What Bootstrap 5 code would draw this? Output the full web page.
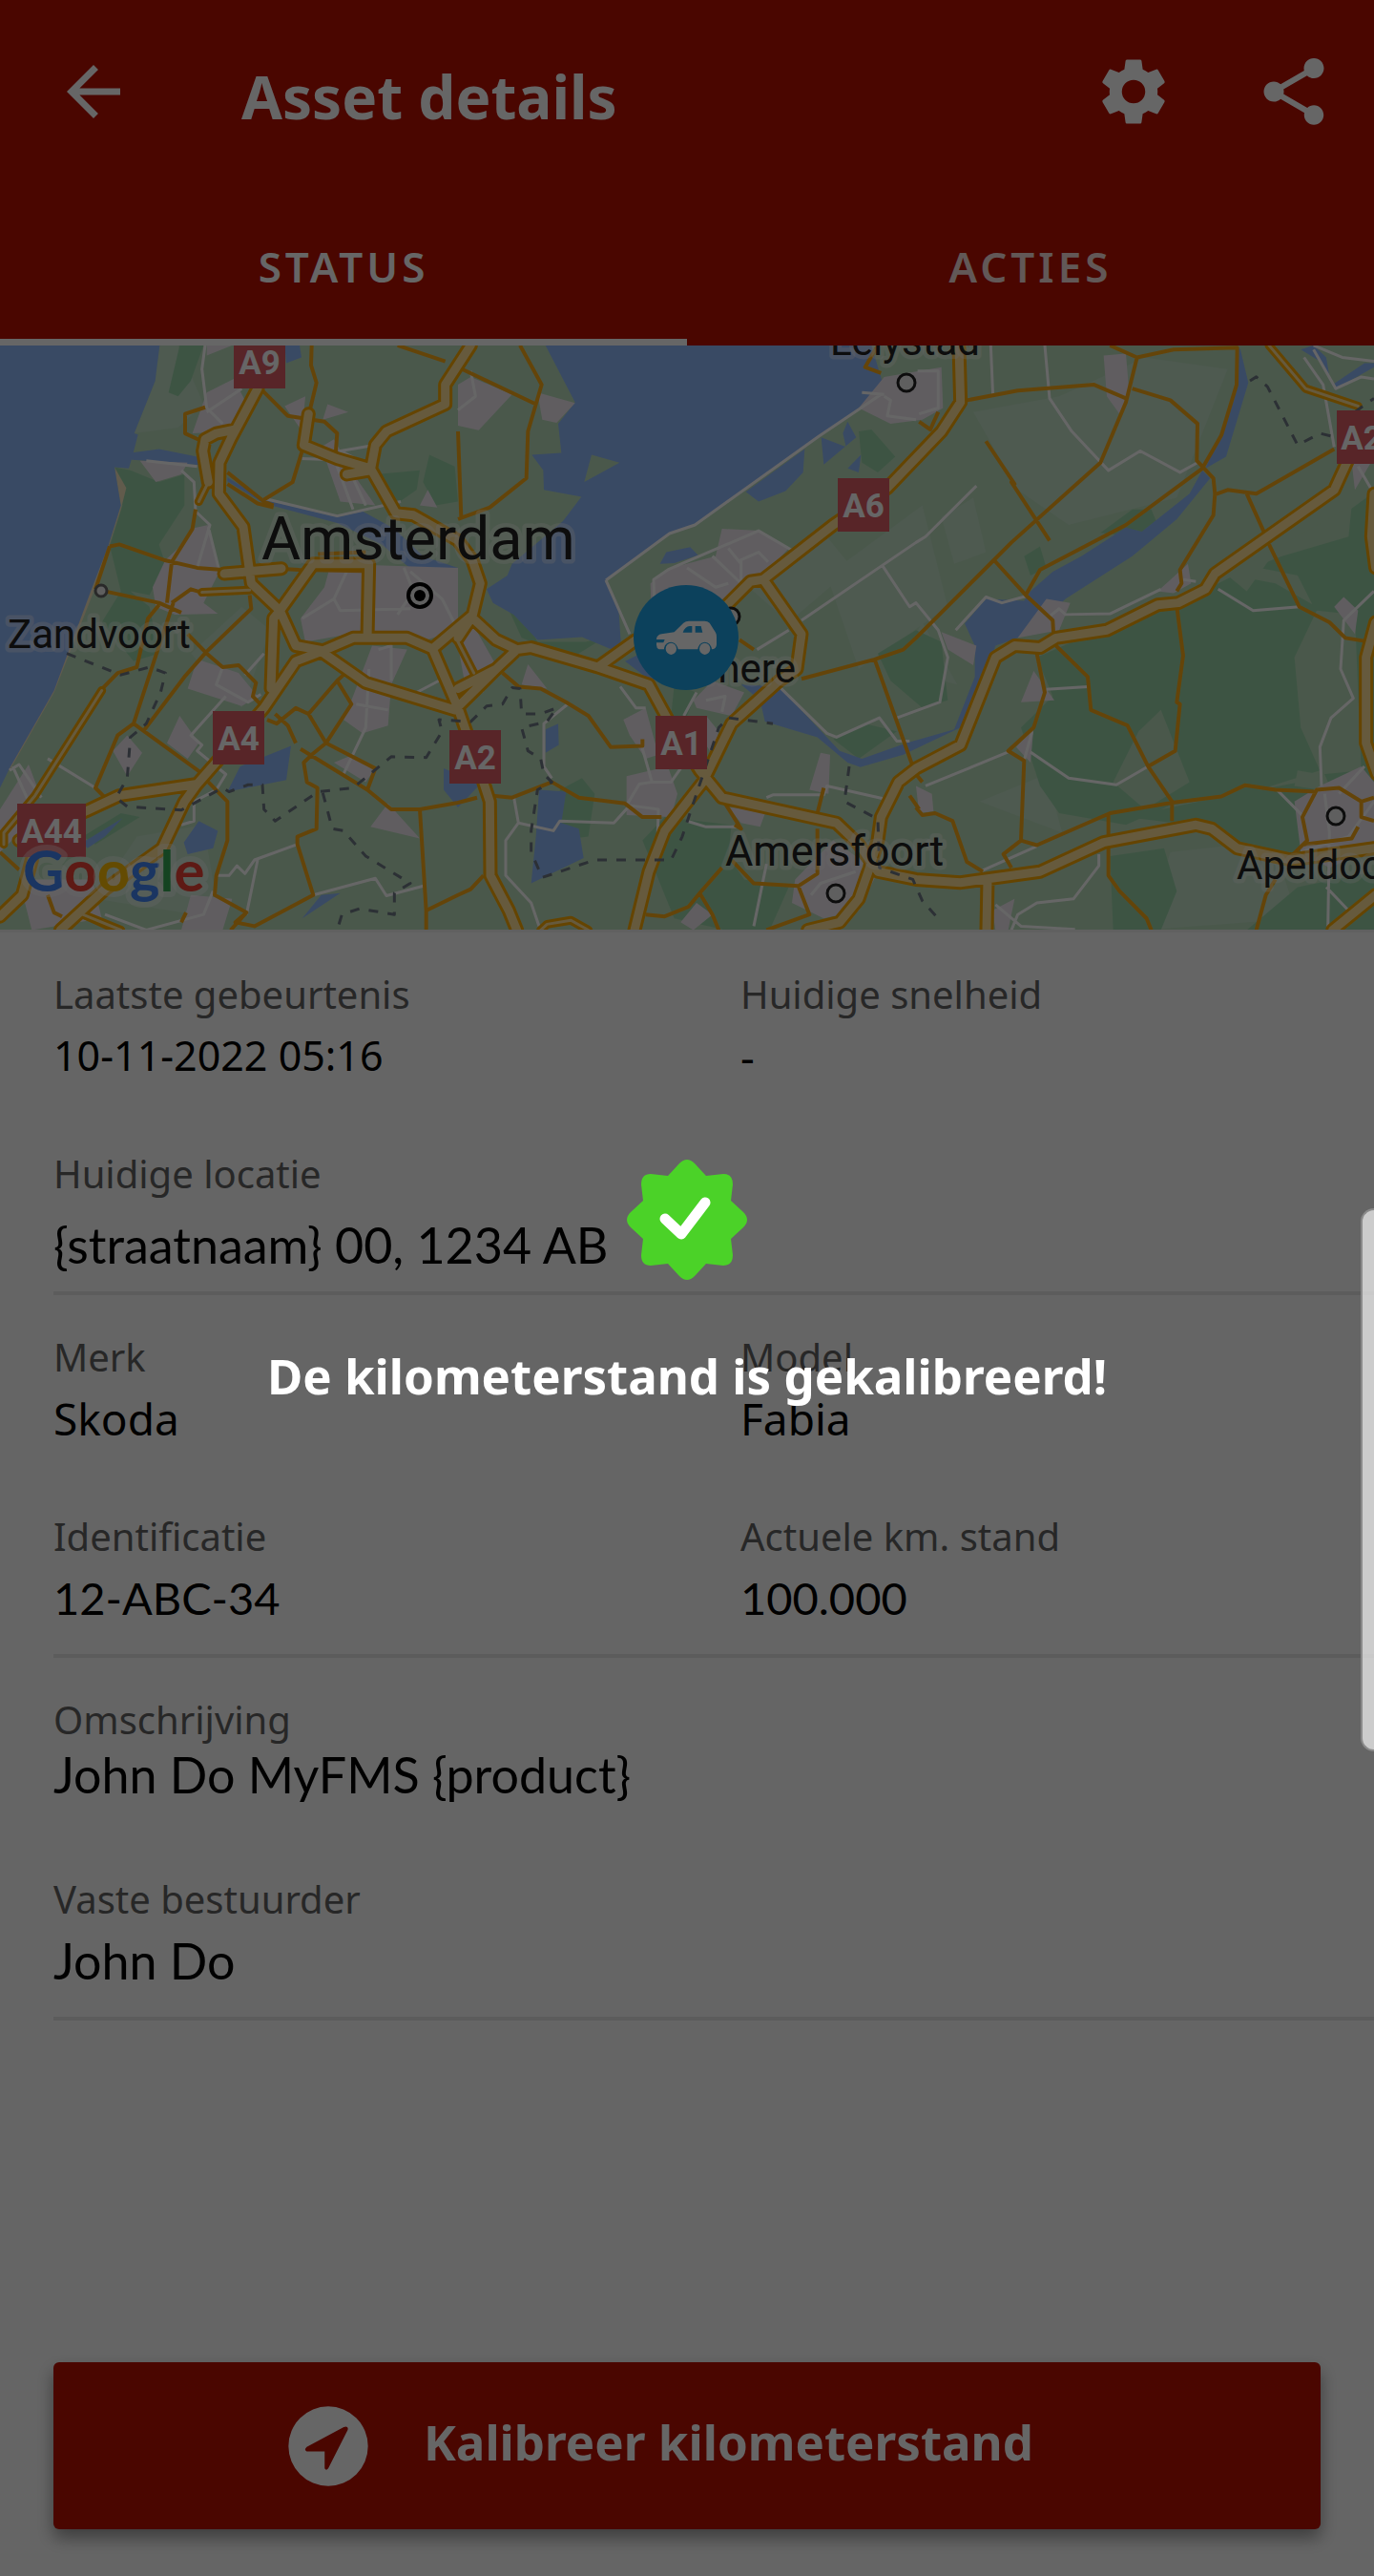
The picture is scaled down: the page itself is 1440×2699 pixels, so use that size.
<!DOCTYPE html>
<html lang="nl">
<head>
<meta charset="utf-8">
<meta name="viewport" content="width=device-width, initial-scale=1">
<title>Asset details</title>
<link href="https://cdn.jsdelivr.net/npm/bootstrap@5.3.0/dist/css/bootstrap.min.css" rel="stylesheet">
<style>
  :root { --brand: #b90f00; --edge: 56px; }
  body { font-family: "Noto Sans", sans-serif; color: #000; background: #fdfdfd; }
  .app-bar { background: var(--brand); color: #fff; }
  .app-row { height: 192px; padding: 0 42px 0 var(--edge); }
  .app-title { font-size: 62px; line-height: 88px; font-weight: 700; margin-left: 113px; padding-top: 10px; }
  .icon-btn { width: 84px; height: 84px; color: #fff; border: 0; background: none; padding: 0; }
  .icon-btn svg, .go-icon, .ok-badge { display: block; width: 100%; height: 100%; fill: currentColor; }
  .app-tools { gap: 84px; }
  .tab-link { height: 170px; font-size: 44px; font-weight: 600; letter-spacing: 4px; color: #fff; opacity: .85; border-bottom: 7px solid transparent; padding-top: 10px; }
  .tab-link.active { opacity: 1; border-color: #fff; }
  .map-view { height: 615px; border-bottom: 3px solid #f0f0f0; }
  .map-view svg { display: block; width: 100%; height: 100%; }
  .geo path { fill: none; stroke-linejoin: round; vector-effect: non-scaling-stroke; }
  .geo .water { fill: #90b8fb; }
  .geo .field { fill: #b9dcbb; }
  .geo .meadow { fill: #c2e0c8; }
  .geo .forest { fill: #9ad3a9; }
  .geo .town { fill: #f0e9f1; }
  .geo .sand { fill: #f3e3bf; }
  .geo .street { stroke: #fff; stroke-width: 3px; }
  .geo .main-road { stroke: #fbab17; stroke-width: 4px; }
  .geo .m-case { stroke: #fcaa00; stroke-width: 15px; stroke-linecap: round; }
  .geo .m-fill { stroke: #fee199; stroke-width: 9px; stroke-linecap: round; }
  .geo .n-case { stroke: #fcaa00; stroke-width: 9px; stroke-linecap: round; }
  .geo .n-fill { stroke: #fee199; stroke-width: 3px; stroke-linecap: round; }
  .geo .border-line { stroke: #6e7884; stroke-width: 3px; stroke-dasharray: 10 10; }
  .place { font-family: Roboto, sans-serif; font-size: 42px; fill: #222; stroke: #fff; stroke-opacity: .35; stroke-width: 9px; stroke-linejoin: round; paint-order: stroke; }
  .place-mid { font-size: 45px; }
  .place-big { font-size: 63px; }
  .shield rect { fill: #dd5d64; }
  .shield text { font-family: Roboto, sans-serif; font-weight: 700; font-size: 35px; fill: #fff; text-anchor: middle; }
  .map-brand { font-family: Lato, sans-serif; font-weight: 700; font-size: 60px; stroke: #fff; stroke-opacity: .35; stroke-width: 12px; stroke-linejoin: round; paint-order: stroke; }
  .asset-group { padding: 37px 0 0; margin-left: var(--edge); border-bottom: 4px solid #e6e6e6; }
  .asset-group dl { margin: 0; }
  .second-col { padding-left: 28px; }
  .asset-group dt { font-size: 40px; line-height: 56px; font-weight: 400; color: #636363; }
  .asset-group dd { font-size: 46px; line-height: 72px; margin: 0 0 60px; }
  .asset-group .stamp { font-size: 43px; }
  .asset-group .plain { font-family: Lato, sans-serif; font-size: 52px; }
  .asset-group .digits { font-family: Lato, sans-serif; font-size: 47px; }
  .asset-group .roomy { line-height: 92px; margin-bottom: 40px; }
  .asset-group .snug { line-height: 58px; margin-bottom: 74px; }
  .asset-group .closing { margin-bottom: 23px; }
  .asset-group .roomy.closing { margin-bottom: 3px; }
  .action-bar { padding: 0 var(--edge) 49px; }
  .go-btn, .go-btn:hover { height: 175px; gap: 50px; padding-right: 75px; font-size: 51px; font-weight: 700; color: #fff; background: var(--brand); border: 0; border-radius: 6px; box-shadow: 0 9px 18px rgba(0,0,0,.4); }
  .go-icon { width: 100px; height: 100px; }
  .dim-layer { background: rgba(0,0,0,.6); gap: 59px; padding-bottom: 5px; color: #fff; }
  .ok-badge { width: 128px; height: 128px; }
  .ok-text { font-size: 51px; line-height: 80px; font-weight: 700; }
  .edge-handle { top: 1266px; right: 0; width: 14px; height: 569px; background: rgba(255,255,255,.67); border: 2px solid #8a8a8a; border-right: 0; border-radius: 14px 0 0 14px; }
</style>
<script src="https://cdn.jsdelivr.net/npm/bootstrap@5.3.0/dist/js/bootstrap.bundle.min.js"></script>
</head>
<body>
<div class="position-relative d-flex flex-column min-vh-100 overflow-hidden">
  <header class="app-bar">
    <div class="app-row d-flex align-items-center">
      <button class="icon-btn" type="button" aria-label="Terug"><svg viewBox="0 0 24 24"><path d="M20 11H7.83l5.59-5.59L12 4l-8 8 8 8 1.41-1.41L7.83 13H20v-2z"/></svg></button>
      <h1 class="app-title mb-0">Asset details</h1>
      <div class="app-tools d-flex ms-auto">
        <button class="icon-btn" type="button" aria-label="Instellingen"><svg viewBox="0 0 24 24"><path d="M19.14 12.94c.04-.3.06-.61.06-.94 0-.32-.02-.64-.07-.94l2.03-1.58a.49.49 0 0 0 .12-.61l-1.92-3.32a.488.488 0 0 0-.59-.22l-2.39.96c-.5-.38-1.03-.7-1.62-.94l-.36-2.54a.484.484 0 0 0-.48-.41h-3.84c-.24 0-.43.17-.47.41l-.36 2.54c-.59.24-1.13.57-1.62.94l-2.39-.96c-.22-.08-.47 0-.59.22L2.74 8.87c-.12.21-.08.47.12.61l2.03 1.58c-.05.3-.09.63-.09.94s.02.64.07.94l-2.03 1.58a.49.49 0 0 0-.12.61l1.92 3.32c.12.22.37.29.59.22l2.39-.96c.5.38 1.03.7 1.62.94l.36 2.54c.05.24.24.41.48.41h3.84c.24 0 .44-.17.47-.41l.36-2.54c.59-.24 1.13-.56 1.62-.94l2.39.96c.22.08.47 0 .59-.22l1.92-3.32c.12-.22.07-.47-.12-.61l-2.01-1.58zM12 15.5a3.5 3.5 0 1 1 0-7 3.5 3.5 0 0 1 0 7z"/></svg></button>
        <button class="icon-btn" type="button" aria-label="Delen"><svg viewBox="0 0 24 24"><path d="M18 16.08c-.76 0-1.44.3-1.96.77L8.91 12.7c.05-.23.09-.46.09-.7s-.04-.47-.09-.7l7.05-4.11c.54.5 1.25.81 2.04.81 1.66 0 3-1.34 3-3s-1.34-3-3-3-3 1.34-3 3c0 .24.04.47.09.7L8.04 9.81C7.5 9.31 6.79 9 6 9c-1.66 0-3 1.34-3 3s1.34 3 3 3c.79 0 1.5-.31 2.04-.81l7.12 4.16c-.05.21-.08.43-.08.65 0 1.61 1.31 2.92 2.92 2.92 1.61 0 2.92-1.31 2.92-2.92s-1.31-2.92-2.92-2.92z"/></svg></button>
      </div>
    </div>
    <nav class="row g-0 text-center">
      <a class="tab-link active col-6 d-flex align-items-center justify-content-center text-decoration-none" href="#status">STATUS</a>
      <a class="tab-link col-6 d-flex align-items-center justify-content-center text-decoration-none" href="#acties">ACTIES</a>
    </nav>
  </header>

  <div class="map-view">
    <svg viewBox="0 0 1440 612" preserveAspectRatio="xMidYMid slice" role="img" aria-label="Kaart">
      <rect width="1440" height="612" fill="#b9dcbb"/>
      <!-- land and road geometry lives on a 4320 x 1530 survey grid -->
      <g class="geo" transform="translate(0 -12) scale(.33333 .40816)">
        <path class="meadow" d="M502 29L488 120 422 255 560 240 640 180 560 29ZM600 820L760 700 850 760 760 960ZM430 1290L640 1260 690 1500 300 1450ZM2340 640L2600 520 2680 600 2480 740ZM2600 620L2900 440 2980 700 2700 860ZM2820 860L2900 740 3010 900ZM3060 200L3330 160 3600 60 3860 90 3700 420 3360 490 3200 400ZM3080 1200L3290 1130 3340 1280ZM2960 470L3060 420 3100 560 3000 590ZM3680 1330L4000 1300 4080 1500 3600 1530Z"/>
        <path class="forest" d="M360 342L410 350 500 380 580 360 580 440 500 540 520 590 470 670 410 660 470 700 500 820 420 840 320 740 380 660 350 560 345 545 385 440ZM565 29L640 29 600 120 560 160 530 150ZM1180 360L1320 350 1310 400 1240 440ZM1350 310L1430 340 1440 430 1370 440 1330 380ZM260 1290L380 1230 440 1240 300 1310ZM2700 250L2740 245 2815 315 2760 355 2710 330ZM1590 690L1660 740 1690 790 1840 790 1900 780 1800 830 1640 780ZM1760 1170L1830 1140 1870 1180 1850 1290 1760 1300ZM2120 900L2190 920 2160 980 2110 980ZM2020 1300L2090 1240 2300 1260 2290 1340 2340 1400 2480 1420 2420 1530 2280 1530 2120 1500ZM3880 620L4060 560 4330 400 4330 1180 4200 1200 4170 1140 4090 1000 4100 880 4070 830 4130 700 4080 620 3960 600ZM3260 830L3400 780 3680 700 3880 620 4010 640 4140 700 4070 830 4100 880 4090 1010 4150 1120 3920 1180 3680 1210 3540 1260 3330 1230 3270 1160 3210 1010 3310 930ZM3540 1240L3770 1200 4150 1140 4120 1320 4080 1340 3860 1300 3740 1260ZM3490 1340L3660 1320 3700 1430 3650 1530 3500 1530ZM4080 1420L4320 1380 4320 1530 3920 1530ZM3220 570L3270 545 3290 600 3240 620ZM3460 510L3560 450 3620 450 3640 490 3560 520ZM2760 820L2880 760 2960 790 2980 940 2900 960 2800 890ZM2620 1040L2720 1000 2820 1020 2700 1090Z"/>
        <path class="field" d="M4080 1120L4150 1130 4150 1170 4070 1160ZM3860 620L4250 440 4240 520 3990 580 3920 660ZM4070 830L4140 710 4260 720 4280 1120 4160 1130 4090 1010ZM3580 1020L3650 965 3740 1150 3600 1220 3500 1150Z"/>
        <path class="sand" d="M360 342L397 395 380 450 300 650 170 920 30 1120 24 1116 290 650 345 530 380 440Z"/>
        <path class="water" d="M0 29H502L488 120 422 255 434 258 415 318 405 345 360 342 380 440 340 545 290 650 170 915 30 1115 0 1165ZM410 305L500 295 620 315 628 336 460 325 405 322ZM715 368L830 425 1060 470 1140 455 1240 500 1330 570 1440 600V645L1310 615 1200 540 1060 485 830 435 715 378ZM895 29H942L948 60 900 75ZM1715 29L1808 175 1755 230 1765 305 1672 310 1708 350 1710 400 1828 418 1770 480 1610 590 1595 620 1530 655 1550 690 1615 720 1690 785 1830 778 1940 815 1952 790 1945 705 1905 632 2105 512 2185 490 2575 262 2720 180 2775 125 2740 29ZM2345 405L2530 295 2525 355 2470 403 2385 430ZM2582 265L2660 290 2650 255 2665 225 2692 265 2590 335ZM2665 345L2707 310 2700 355ZM2075 590L2095 560 2170 547 2195 568 2120 588ZM1965 840L2040 810 2060 890 2030 880ZM2330 900L2450 905 2640 1070 2710 1090 2850 1050 3000 1015 3065 880 3065 800 3033 743 3100 680 3220 685 3240 660 3310 610 3400 570 3540 497 3590 507 3740 410 3780 350 3805 370 3700 475 3560 570 3350 680 3300 720 3200 780 3130 800 3100 880 3020 1010 2840 1080 2705 1112 2665 1100 2570 1035 2405 995 2390 940ZM3790 345L3880 170 3890 29 3900 40 3925 125 3855 315ZM715 1175L755 1110 915 1057 900 1145ZM578 1305L625 1250 685 1275 670 1320 590 1335ZM260 1305L385 1243 330 1290 275 1320ZM1695 1170L1780 1175 1765 1255 1820 1270 1835 1345 1670 1410 1685 1290ZM1715 1015L1755 1000 1757 1055 1715 1075ZM950 1500L1010 1440 1070 1435ZM1395 1115L1510 1155 1440 1215 1395 1170ZM4090 40L4130 29 4170 60 4180 110 4150 70ZM4190 130L4290 75 4320 75V85L4200 140Z"/>
        <path class="field" d="M1860 310L1948 330 1837 380Z"/>
        <path class="town" d="M440 325L590 330 570 360 490 380ZM650 29H730L650 55ZM605 255L650 150 735 115 770 170 720 250ZM560 550L600 500 655 490 690 610 640 690 685 718 550 720 490 700 480 650 520 580ZM895 185L960 160 950 250ZM1030 180L1095 200 1015 220ZM1010 290L1050 270 1120 370 1180 440 1070 430ZM1320 440L1345 400 1375 445ZM590 910L620 835 750 870 810 930 760 955ZM525 1050L565 980 625 1050 590 1090ZM355 1070L400 1030 447 1075 400 1135ZM0 1220L90 1105 120 1170 50 1290 0 1330ZM60 1400L290 1400 320 1500 100 1530ZM600 1440L730 1450 700 1530 570 1530ZM945 730L1020 650 1040 590 1440 600 1440 760 1320 790 1100 770 960 790ZM1170 800L1280 810 1230 900 1220 1005 1140 1025 1080 990 1110 930ZM1050 1100L1110 1080 1175 1120 1150 1150ZM1165 1265L1220 1205 1320 1295ZM1440 130L1480 110 1610 155 1505 247 1440 235ZM1690 150L1808 177 1750 228 1705 220ZM1440 800L1490 750 1560 850 1460 890ZM1640 900L1660 848 1720 910ZM1960 990L2030 960 2070 1080 2030 1090 1980 1030ZM1970 1135L2100 1110 2130 1180 2110 1240 1970 1235ZM2045 640L2110 600 2250 570 2270 500 2390 505 2480 550 2410 610 2330 640 2240 750 2050 760ZM2180 940L2240 890 2340 920 2300 980 2190 960ZM2220 980L2260 1020 2240 1080 2200 1030ZM2545 1170L2580 1075 2610 1080 2605 1180ZM2500 1400L2620 1300 2760 1380 2700 1480 2590 1500 2490 1460ZM2290 1215L2410 1220 2390 1265 2330 1255ZM2140 1510L2190 1460 2240 1490 2180 1530ZM2700 190L2780 110 2960 85 2965 190 2900 220 2800 230ZM3470 55L3540 50 3550 150 3520 205 3480 160ZM3200 780L3290 680 3365 690 3330 760ZM2960 765L3070 800 3060 850 2980 810ZM3210 945L3250 865 3315 940ZM3195 1060L3250 1010 3240 1100ZM3640 660L3735 590 3745 640 3690 665ZM4195 700L4225 675 4270 710 4260 770ZM4070 1200L4150 1160 4280 1110 4320 1150V1320L4180 1370 4090 1330ZM2880 1160L2930 1180 2935 1225 2890 1230ZM3120 1480L3190 1450 3170 1530 3130 1530ZM4250 330H4310L4260 400Z"/>
        <path class="street" d="M645 29L635 90 650 190 700 230M650 200L760 140M460 325L620 340M570 350L610 380 615 455 660 490 620 600M655 495L690 610M830 422L1060 467 1260 430M950 320L1130 325 1070 300 1180 285M1060 340L1110 450M1110 370L1150 440M30 1120L60 1105 130 1190M150 1090L300 1165M40 1110L90 1200M830 820L770 875M700 855L680 900 780 945 820 925M710 930L600 1030 635 1055 620 1070 710 1130 680 1170 610 1200 610 1250 570 1260M680 1390L720 1390 745 1365 770 1385 800 1350 935 1310M810 1350L775 1490M985 1440L1180 1397 1215 1442 1340 1415M1160 860L1150 1010 1080 1130M1120 950L1220 965M1190 810L1230 800 1230 890M1310 920L1380 890M950 730L1050 680 1090 610M1050 680L1070 710 1290 705M1270 600L1300 660 1250 720M1290 610L1390 680 1440 760M330 1490L460 1530 640 1490 670 1430M1480 95L1495 160 1440 195M1440 935L1520 915M1950 905L2000 960 2030 960M1785 950L1710 1000 1710 1110 1735 1140M1615 1185L1630 1255 1590 1300 1590 1390 1670 1460 1695 1520M1630 1255L1740 1275 1760 1250 1930 1255 1980 1210 2070 1220 2068 1280M2015 1050L2050 1150 2110 1150 2170 1080M2050 1150L2010 1155 1970 1210M2160 1250L2220 1265 2330 1265M2190 920L2150 980M1905 632L1980 770M1905 632L2105 512 2185 490 2575 262 2770 155M2060 760L2055 630 2100 605 2385 505 2490 555M2240 570L2330 640 2330 580 2385 560 2415 585M2290 550L2330 590M2160 600L2250 650 2290 640M2380 810L2480 760M2520 735L2880 535 2910 520 3070 390M2775 595L2860 700 2880 690 2950 760 2980 830 2955 945 2820 985M2450 905L2600 1025 2630 1035 2765 985 2820 1045 2860 1045M2220 940L2280 930 2270 970M2410 1190L2430 1183 2590 1183 2600 1160 2790 1195M2370 1520L2410 1360M2550 1440L2580 1410 2690 1380M3115 29L3122 160M3285 29L3300 165 3370 250 3485 350 3585 300 3710 355 3765 330M3005 760L3100 675 3150 690 3225 673M3300 725L3330 705 3350 720 3490 718 3650 655M3720 630L3760 635M3830 655L3940 710 4085 700M4320 660L4225 735 4215 860 4255 935 4185 985 4150 1060 4155 1160M3290 912L3420 905M2910 1160L3170 1073M3245 1020L3220 1095M3240 1073L3360 1140 3510 1157 3610 1110M4015 1170L4100 1240M3080 1380L3260 1315M3455 1335L3455 1365 3375 1450 3260 1460 3200 1490 3180 1530M3130 1465L3210 1520 3380 1528M4100 60L4160 130 4195 290M4130 40L4200 140 4280 110 4320 115M4130 29L4220 60 4320 70M4270 340L4320 410M4165 1180L4180 1280 4175 1530M4170 1420L4240 1480M2885 95H2950V190L2890 205M2780 160L2800 170 2790 210 2880 220M2710 150L2780 155M4210 1180L4290 1110M4090 1330L4240 1290 4320 1200"/>
        <path class="main-road" d="M645 188L582 205 582 255 635 275M825 145L905 210 1020 225 1060 255 1055 310M980 29L978 80 995 125 970 210M950 300L920 380 830 425M715 355L830 430 860 440M715 385L810 435 860 445M615 450L605 500 540 585 525 690M345 545L375 540 515 580 620 600 700 605M300 655L500 690 570 715M345 545L300 655M540 690L600 655 640 665M545 690L500 800 420 1000 370 1030 300 1165 330 1190M500 695L465 730 430 855 370 870 310 920M785 670L790 705 650 815 580 880 450 1020M590 770L650 820 700 855 750 850 805 895 795 930 830 960M420 1000L630 1125M655 1150L715 1200 715 1300 680 1390 675 1440 775 1485 725 1530M775 1485L740 1510 800 1520 985 1440 935 1310 935 1290 995 1270 998 1165 965 1150 955 1100 980 1080 1025 1050 1105 950 1060 890 970 975 930 960 870 1000 840 990M865 975L905 1005 930 1050M945 1065L1155 1170 1230 1220 1320 1220 1440 1203M1025 1050L1180 1115 1155 1170M970 975L1025 1050M1060 890L1080 875M1320 1220L1340 1480 1340 1530M1340 1480L1440 1440M1250 29L1400 70M1440 85L1685 180M1635 29L1703 130 1685 180 1660 250 1655 370 1540 445 1440 475M1440 250L1450 470M885 603L940 605 1140 608M1000 565L1150 560M1580 870L1630 905 1700 910 1780 945 1850 980 1920 1060 2020 1057 2020 1040M1440 1203L1500 1190M1550 1185L1610 1190 1735 1150 1820 1190 1965 1205 2020 1240 2080 1240M2280 1205L2330 1270 2310 1260M1440 1440L1480 1425 1520 1390M2030 1490L2090 1495 2165 1470 2200 1435 2270 1370M2200 1435L2240 1490 2260 1530M2300 1350L2370 1410 2510 1417 2570 1385 2570 1270M2510 1417L2545 1490 2410 1530M2590 1165L2570 1230M2325 785L2370 810M2520 885L2750 835 2840 810 2880 780 3125 580 3180 535 3460 330 3540 175 3575 60 3490 29M3575 60L3690 40 3890 35 3888 130 3840 260 3780 345 3540 490 3270 605 3225 670M2750 835L2870 1110M3040 170L3200 145 3440 130 3540 165M3560 140L3680 170 3765 230 3763 325 3815 370 3820 410 3815 465 3710 605 3715 640 3700 660M3100 275L3190 385 3180 380 3300 530M3125 580L3225 670 3310 735 3312 765M3820 412L3860 400 3950 410 4195 295M3920 410L3975 510M3990 540L4085 700 4180 740 4230 780 4290 788M3700 700L3720 825 3700 945 3710 950 3695 1070 3610 1110M3320 800L3420 880 3430 965 3545 1005 3610 1110 3685 1200 3685 1250M3260 820L3285 920 3250 1010 3170 1070 3220 1095 3210 1300 3155 1335 3180 1370M3210 1300L3260 1312 3490 1230 3685 1203 3840 1187 3915 1158 4010 1170 4140 1175M3485 1230V1390L3520 1430 3605 1500 3620 1530M2880 1130L2900 1150M2880 1215L2900 1235 2940 1230 2995 1250 3040 1355 3090 1380M4060 1340L4110 1300 4095 1240 4140 1170 4210 1165 4280 1200 4320 1190M4280 1200L4280 1240 4320 1250M4100 1310L4250 1295 4270 1265M3950 1530L3980 1440 4010 1400M4060 1335L4000 1340M2890 225L2925 245 2950 200M2760 29L2720 85 2770 100M150 1440L170 1485 195 1495M260 1495L350 1530M570 1510L585 1485M0 1330L60 1375M2860 1185L2890 1220"/>
        <path class="n-case" d="M635 663L785 657M320 915L110 1185 12 1280 12 1310M655 380L625 430M3990 29L4105 140 4270 185M260 1490L380 1530M1700 1530L1720 1515 1795 1505 1850 1530M1440 790L1490 870"/>
        <path class="m-case" d="M810 140L725 270 690 330 688 410 765 495 790 640 880 710 930 800 1010 812M740 245L680 255 645 270 638 300 655 380M705 615L885 602M970 205L955 285 1060 320 1165 345 1245 460 1300 465 1440 530 1485 580 1510 640 1485 725 1440 780M1480 29L1400 130 1400 180 1215 250 1180 285 1165 350 1090 360M880 710L860 730 852 910M620 1155L375 1185 270 1225 60 1300M1155 780L1160 590 985 590 880 710M690 1090L830 960 930 840 1010 815 1110 780 1280 780 1360 808 1480 725 1560 785 1625 810 1670 805 1880 855 2040 900 2100 990 2200 1120 2270 1190 2630 1255 2700 1310 2760 1380 2880 1400 3020 1408 3270 1380 3470 1305 3760 1260 3810 1270 3890 1320 4060 1350 4320 1320M1010 815L1150 895 1430 965 1560 860 1625 810M1440 910L1560 860M1360 808L1440 960 1500 1100 1540 1200 1542 1390 1600 1480 1625 1530M190 1530L330 1425 510 1320 580 1200 620 1155 690 1090M0 1495L70 1440 100 1350M1880 855L2000 785 2280 700 2360 635 2400 630 2620 490 2790 395 2960 250 3020 175 3015 29M2400 630L2520 770 2505 860 2450 890 2300 1000 2210 1150 2090 1275 2040 1380 1995 1530M2540 1530L2640 1510 2700 1450 2730 1380 2760 1300 2770 1240 2825 1150 2880 1115 3020 1055 3130 830 3190 800 3270 805 3320 780 3480 760 3640 695 3705 690 3790 655 3820 615 4195 400 4240 320M3105 1400L3102 1530M4325 740L4295 830 4295 1050 4330 1130M4325 1440L4190 1530M4320 410L4312 520 4325 600"/>
        <path class="n-fill" d="M635 663L785 657M320 915L110 1185 12 1280 12 1310M655 380L625 430M3990 29L4105 140 4270 185M260 1490L380 1530M1700 1530L1720 1515 1795 1505 1850 1530M1440 790L1490 870"/>
        <path class="m-fill" d="M810 140L725 270 690 330 688 410 765 495 790 640 880 710 930 800 1010 812M740 245L680 255 645 270 638 300 655 380M705 615L885 602M970 205L955 285 1060 320 1165 345 1245 460 1300 465 1440 530 1485 580 1510 640 1485 725 1440 780M1480 29L1400 130 1400 180 1215 250 1180 285 1165 350 1090 360M880 710L860 730 852 910M620 1155L375 1185 270 1225 60 1300M1155 780L1160 590 985 590 880 710M690 1090L830 960 930 840 1010 815 1110 780 1280 780 1360 808 1480 725 1560 785 1625 810 1670 805 1880 855 2040 900 2100 990 2200 1120 2270 1190 2630 1255 2700 1310 2760 1380 2880 1400 3020 1408 3270 1380 3470 1305 3760 1260 3810 1270 3890 1320 4060 1350 4320 1320M1010 815L1150 895 1430 965 1560 860 1625 810M1440 910L1560 860M1360 808L1440 960 1500 1100 1540 1200 1542 1390 1600 1480 1625 1530M190 1530L330 1425 510 1320 580 1200 620 1155 690 1090M0 1495L70 1440 100 1350M1880 855L2000 785 2280 700 2360 635 2400 630 2620 490 2790 395 2960 250 3020 175 3015 29M2400 630L2520 770 2505 860 2450 890 2300 1000 2210 1150 2090 1275 2040 1380 1995 1530M2540 1530L2640 1510 2700 1450 2730 1380 2760 1300 2770 1240 2825 1150 2880 1115 3020 1055 3130 830 3190 800 3270 805 3320 780 3480 760 3640 695 3705 690 3790 655 3820 615 4195 400 4240 320M3105 1400L3102 1530M4325 740L4295 830 4295 1050 4330 1130M4325 1440L4190 1530M4320 410L4312 520 4325 600"/>
        <path class="border-line" d="M210 820L380 875 470 855 520 870 505 920 460 1000 410 1035 400 1140 365 1190 400 1213 570 1222 700 1165 720 1175 780 1157 825 1157 830 1220 865 1250 1000 1175 1110 1165 1230 1085 1340 1087 1390 1020 1380 990 1480 995 1530 955 1580 950 1610 908 1635 910 1640 975 1700 975 1750 960 1720 995 1640 1010 1660 1070 1700 1090 1710 1130 1735 1150 1690 1170 1670 1275 1670 1330 1705 1395 1870 1350 2110 1350 2145 1290 2190 1180 2260 1010 2290 985 2430 1000M1015 1178L1045 1270 1080 1275 1150 1340 1290 1410 1240 1435 1240 1490 1130 1475 1075 1490 1060 1530M2670 1110L2655 1200 2760 1245 2765 1370 2870 1400 2900 1455 2960 1510M3930 120L3950 110 3985 135 4080 285 4150 255 4200 265M4260 200L4320 165"/>
      </g>
      <g class="shield">
        <rect x="245" y="-11" width="54" height="56"/><text x="272" y="30">A9</text>
        <rect x="223" y="383" width="54" height="56"/><text x="250" y="424">A4</text>
        <rect x="18" y="480" width="72" height="56"/><text x="54" y="521">A44</text>
        <rect x="471" y="403" width="54" height="56"/><text x="498" y="444">A2</text>
        <rect x="687" y="388" width="54" height="56"/><text x="714" y="429">A1</text>
        <rect x="878" y="139" width="54" height="56"/><text x="905" y="180">A6</text>
        <rect x="1401" y="68" width="72" height="56"/><text x="1437" y="109">A28</text>
      </g>
      <g fill="#eee" stroke="#222" stroke-width="3">
        <circle cx="106" cy="257" r="6" stroke="#666"/><circle cx="950" cy="39" r="9"/><circle cx="766" cy="284" r="9"/>
        <circle cx="876" cy="574" r="9"/><circle cx="1400" cy="493" r="9"/>
        <circle cx="440" cy="262" r="12" stroke="#000" stroke-width="4"/><circle cx="440" cy="262" r="6" fill="#000" stroke="none"/>
      </g>
      <text class="place place-big" x="274" y="224">Amsterdam</text>
      <text class="place" x="8" y="317">Zandvoort</text>
      <text class="place place-mid" x="760" y="545">Amersfoort</text>
      <text class="place" x="1296" y="559">Apeldoorn</text>
      <text class="place" x="870" y="10">Lelystad</text>
      <text class="place" x="834" y="353" text-anchor="end">Almere</text>
      <text class="map-brand" x="24" y="572"><tspan fill="#4285f4">G</tspan><tspan fill="#ea4335">o</tspan><tspan fill="#fbbc05">o</tspan><tspan fill="#4285f4">g</tspan><tspan fill="#34a853">l</tspan><tspan fill="#ea4335">e</tspan></text>
      <circle cx="719" cy="306" r="55" fill="#20a3e6"/>
      <g transform="translate(480 -12) scale(.33333 .40816)">
        <path fill="#fff" d="M624 791V782Q626 772 640 770L680 765 709 742Q716 737 726 737H775Q785 737 791 742L810 766Q813 770 813 778V797Q812 808 800 809H632Q624 806 624 798Z"/>
        <path fill="#20a3e6" d="M624 784H650L646 792H624ZM707 766Q715 750 728 750H736V766ZM746 750H764L769 766H746Z"/>
        <path fill="#20a3e6" d="M648 812V806Q652 792 670 791 688 792 693 812ZM753 812Q757 792 776 791 795 792 799 812Z"/>
        <ellipse cx="670" cy="808" rx="17" ry="15" fill="#fff"/><ellipse cx="776" cy="808" rx="17" ry="15" fill="#fff"/>
      </g>
    </svg>
  </div>

  <main id="status">
    <section class="asset-group">
      <div class="row g-0">
        <dl class="col-6"><dt>Laatste gebeurtenis</dt><dd class="stamp">10-11-2022 05:16</dd></dl>
        <dl class="col-6 second-col"><dt>Huidige snelheid</dt><dd>-</dd></dl>
        <dl class="col-12"><dt>Huidige locatie</dt><dd class="plain roomy closing">{straatnaam} 00, 1234 AB</dd></dl>
      </div>
    </section>
    <section class="asset-group">
      <div class="row g-0">
        <dl class="col-6"><dt>Merk</dt><dd>Skoda</dd></dl>
        <dl class="col-6 second-col"><dt>Model</dt><dd>Fabia</dd></dl>
        <dl class="col-6"><dt>Identificatie</dt><dd class="digits closing">12-ABC-34</dd></dl>
        <dl class="col-6 second-col"><dt>Actuele km. stand</dt><dd class="digits closing">100.000</dd></dl>
      </div>
    </section>
    <section class="asset-group">
      <dl><dt>Omschrijving</dt><dd class="plain snug">John Do MyFMS {product}</dd></dl>
      <dl><dt>Vaste bestuurder</dt><dd class="plain closing">John Do</dd></dl>
    </section>
  </main>

  <footer class="action-bar mt-auto">
    <button class="go-btn btn w-100 d-flex align-items-center justify-content-center" type="button">
      <svg class="go-icon" viewBox="0 0 24 24"><path fill-rule="evenodd" d="M12 2a10 10 0 1 0 0 20 10 10 0 0 0 0-20zM16.5 7.100q.6.1.4.8L12 17.600q-.5.7-.9 0V13.300H6.600q-.8-.4 0-1.100L15.900 7.200z"/></svg>
      <span class="pb-2">Kalibreer kilometerstand</span>
    </button>
  </footer>

  <div class="dim-layer position-absolute top-0 start-0 w-100 h-100 d-flex flex-column align-items-center justify-content-center" role="status">
    <svg class="ok-badge" viewBox="0 0 128 128"><path fill="#4bd228" d="M56 5Q64-3 72 5L84 18 102 16Q112 16 112 27L110 44 123 56Q131 64 123 72L110 84 112 101Q112 112 102 112L84 110 72 123Q64 131 56 123L44 110 26 112Q16 112 16 101L18 84 5 72Q-3 64 5 56L18 44 16 27Q16 16 26 16L44 18Z"/><path fill="none" stroke="#fff" stroke-width="11" stroke-linecap="round" stroke-linejoin="round" d="M41 63L58 79 83 46"/></svg>
    <div class="ok-text text-center">De kilometerstand is gekalibreerd!</div>
  </div>
  <div class="edge-handle position-absolute"></div>
</div>
</body>
</html>
